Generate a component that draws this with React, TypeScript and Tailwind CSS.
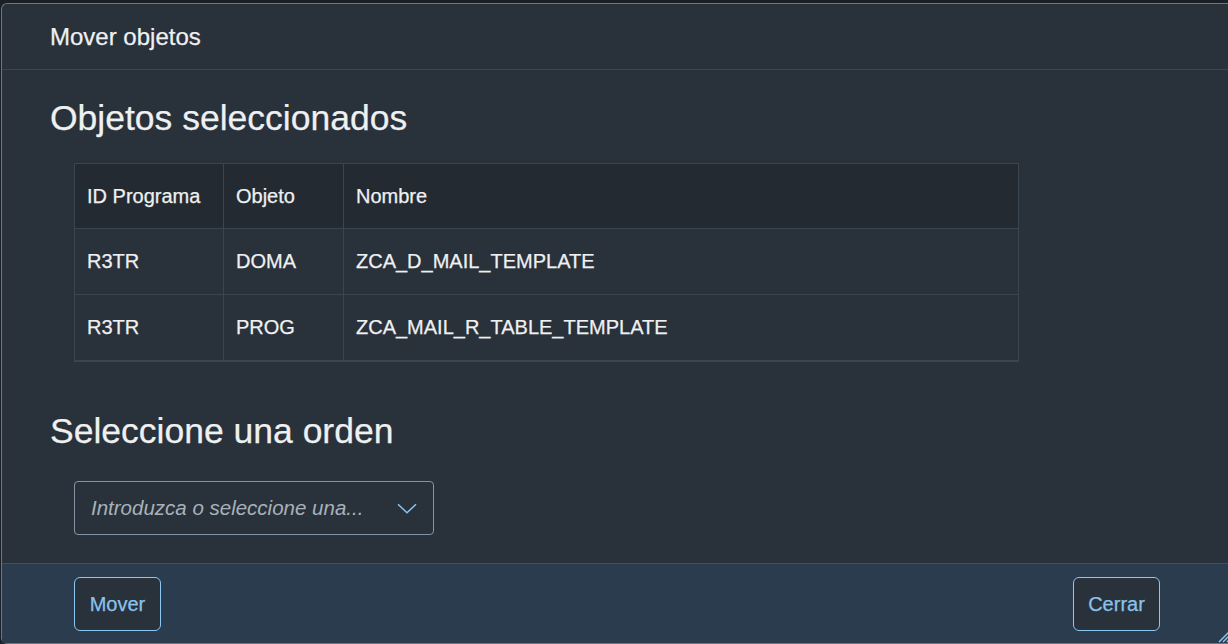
import React from "react";

const rows = [
  { id: "R3TR", obj: "DOMA", name: "ZCA_D_MAIL_TEMPLATE" },
  { id: "R3TR", obj: "PROG", name: "ZCA_MAIL_R_TABLE_TEMPLATE" },
];

const font = { fontFamily: '"Liberation Sans", Arial, sans-serif' };

const App = () => {
  return (
    <div className="h-[644px] w-[1228px] overflow-hidden bg-[#1b2026] pt-[3px] pl-[1px]" style={font}>
      <div className="relative flex h-[641px] w-[1231px] flex-col rounded-tl-[6px] rounded-bl-[6px] border-t border-l border-b border-[#6f767d] bg-[#29313a] text-[#eef0f2] [-webkit-text-stroke:0.25px]">
        {/* header */}
        <div className="flex h-[66px] items-center border-b border-[#3c4650] pl-12 text-[24px]">
          Mover objetos
        </div>

        {/* body */}
        <div className="flex-1 pl-12 pt-[31px]">
          <h2 className="text-[35.5px] leading-none">Objetos seleccionados</h2>

          <div className="ml-6 mt-[26px] w-[945px] border-x border-t border-b-2 border-[#3a4550] text-[20px]">
            <div className="flex h-[65px] border-b border-[#3a4550] bg-[#232a31]">
              <div className="flex w-[149px] items-center border-r border-[#3a4550] px-3">ID Programa</div>
              <div className="flex w-[120px] items-center border-r border-[#3a4550] px-3">Objeto</div>
              <div className="flex flex-1 items-center px-3">Nombre</div>
            </div>
            {rows.map((r, i) => (
              <div
                key={r.name}
                className={
                  i < rows.length - 1
                    ? "flex h-[66px] border-b border-[#3a4550]"
                    : "flex h-[65px]"
                }
              >
                <div className="flex w-[149px] items-center border-r border-[#3a4550] px-3">{r.id}</div>
                <div className="flex w-[120px] items-center border-r border-[#3a4550] px-3">{r.obj}</div>
                <div className="flex flex-1 items-center px-3">{r.name}</div>
              </div>
            ))}
          </div>

          <h2 className="mt-[52px] text-[35.5px] leading-none">Seleccione una orden</h2>

          <div className="ml-6 mt-[32px] flex h-[54px] w-[360px] items-center justify-between rounded-[4px] border border-[#8494a6] pl-4 pr-4">
            <span className="text-[20.5px] italic text-[#a8b1ba] [-webkit-text-stroke:0px]">Introduzca o seleccione una...</span>
            <svg width="20" height="11" viewBox="0 0 20 11" fill="none">
              <path d="M1 1.2 L10 9.8 L19 1.2" stroke="#8cc4f0" strokeWidth="1.5" />
            </svg>
          </div>
        </div>

        {/* footer */}
        <div className="flex h-[80px] items-start justify-between border-t border-[#3e5064] bg-[#2c3c4f] pt-[13px] pl-[72px] pr-[72px]">
          <button className="flex h-[54px] w-[87px] items-center justify-center rounded-[6px] border border-[#8cc6f2] bg-[#29313a] text-[20px] text-[#89c2ee]">
            Mover
          </button>
          <button className="flex h-[54px] w-[87px] items-center justify-center rounded-[6px] border border-[#8cc6f2] bg-[#29313a] text-[20px] text-[#89c2ee]">
            Cerrar
          </button>
        </div>

        {/* resize handle */}
        <svg className="absolute right-[2px] bottom-0" width="14" height="14" viewBox="0 0 14 14" fill="none">
          <path d="M13 3 L3 13 M13 7 L7 13 M13 11 L11 13" stroke="#8cc6f2" strokeWidth="1.5" />
        </svg>
      </div>
    </div>
  );
};

export default App;
